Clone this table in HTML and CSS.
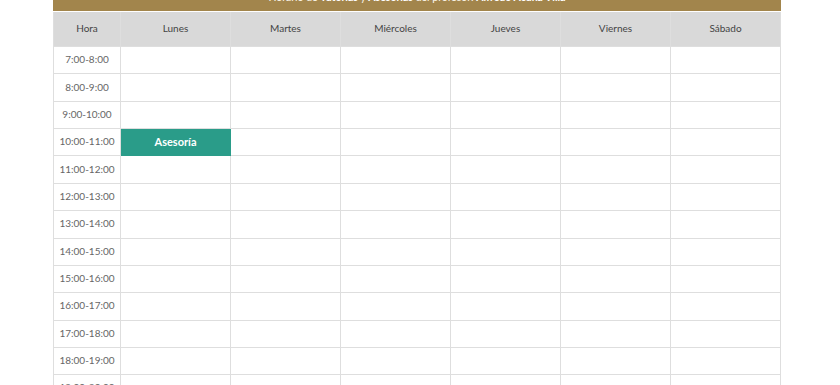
FILE: index.html
```html
<!DOCTYPE html>
<html lang="es">
<head>
<meta charset="utf-8">
<link rel="stylesheet" href="styles.css">
</head>
<body>
<div class="wrap">
  <div class="banner">Horario de <b>Tutorías</b> y <b>Asesorías</b> del profesor: <b>Alfredo Acuña Villa</b></div>
  <table class="schedule">
    <colgroup>
      <col class="col-hora"><col><col><col><col><col><col>
    </colgroup>
    <thead>
      <tr><th>Hora</th><th>Lunes</th><th>Martes</th><th>Miércoles</th><th>Jueves</th><th>Viernes</th><th>Sábado</th></tr>
    </thead>
    <tbody>
      <tr><td>7:00-8:00</td><td></td><td></td><td></td><td></td><td></td><td></td></tr>
      <tr><td>8:00-9:00</td><td></td><td></td><td></td><td></td><td></td><td></td></tr>
      <tr><td>9:00-10:00</td><td></td><td></td><td></td><td></td><td></td><td></td></tr>
      <tr><td>10:00-11:00</td><td class="busy">Asesoría</td><td></td><td></td><td></td><td></td><td></td></tr>
      <tr><td>11:00-12:00</td><td></td><td></td><td></td><td></td><td></td><td></td></tr>
      <tr><td>12:00-13:00</td><td></td><td></td><td></td><td></td><td></td><td></td></tr>
      <tr><td>13:00-14:00</td><td></td><td></td><td></td><td></td><td></td><td></td></tr>
      <tr><td>14:00-15:00</td><td></td><td></td><td></td><td></td><td></td><td></td></tr>
      <tr><td>15:00-16:00</td><td></td><td></td><td></td><td></td><td></td><td></td></tr>
      <tr><td>16:00-17:00</td><td></td><td></td><td></td><td></td><td></td><td></td></tr>
      <tr><td>17:00-18:00</td><td></td><td></td><td></td><td></td><td></td><td></td></tr>
      <tr><td>18:00-19:00</td><td></td><td></td><td></td><td></td><td></td><td></td></tr>
      <tr><td>19:00-20:00</td><td></td><td></td><td></td><td></td><td></td><td></td></tr>
      <tr><td>20:00-21:00</td><td></td><td></td><td></td><td></td><td></td><td></td></tr>
    </tbody>
  </table>
</div>
</body>
</html>
```
FILE: styles.css
```css
html, body {
  margin: 0;
  padding: 0;
  background: #ffffff;
  overflow: hidden;
}
body {
  font-family: Lato, "Open Sans", "Liberation Sans", sans-serif;
  color: #555;
}
.wrap {
  width: 728px;
  margin: -18px 0 0 53px;
}
.banner {
  background: #a2854c;
  color: #fdf8ec;
  font-size: 10.5px;
  line-height: 14px;
  text-align: center;
  padding: 8px 0 7px;
}
.banner b {
  font-weight: 700;
  color: #fff;
}
.schedule {
  width: 728px;
  border-collapse: collapse;
  table-layout: fixed;
  margin-top: 1px;
}
.col-hora {
  width: 67px;
}
.schedule th {
  background: #d9d9d9;
  color: #444;
  font-weight: 400;
  font-size: 10px;
  height: 32px;
  padding: 0 0 2px;
  border: 1px solid #dedede;
  border-top: none;
}
.schedule td {
  height: 24.36px;
  padding: 0 0 2px;
  border: 1px solid #dedede;
  text-align: center;
  font-size: 10px;
  color: #666;
}
.schedule td.busy {
  background: #2a9c89;
  color: #fff;
  font-weight: 700;
  font-size: 11px;
  border-color: #2a9c89;
}
```
